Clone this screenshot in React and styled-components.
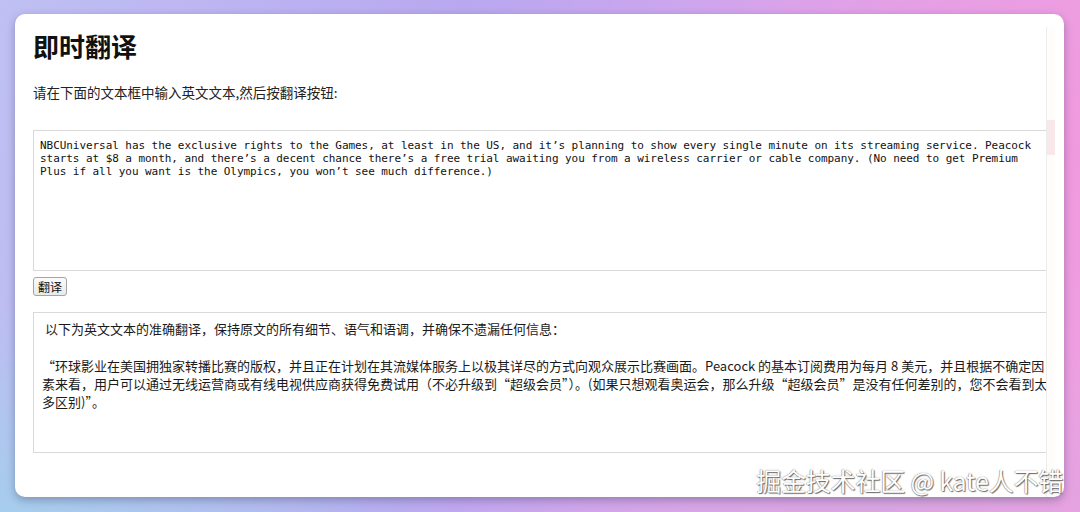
import React, { useState } from "react";
import styled, { createGlobalStyle } from "styled-components";

const sourceText =
  "NBCUniversal has the exclusive rights to the Games, at least in the US, and it’s planning to show every single minute on its streaming service. Peacock starts at $8 a month, and there’s a decent chance there’s a free trial awaiting you from a wireless carrier or cable company. (No need to get Premium Plus if all you want is the Olympics, you won’t see much difference.)";

const resultText =
  " 以下为英文文本的准确翻译，保持原文的所有细节、语气和语调，并确保不遗漏任何信息：\n\n“环球影业在美国拥独家转播比赛的版权，并且正在计划在其流媒体服务上以极其详尽的方式向观众展示比赛画面。Peacock 的基本订阅费用为每月 8 美元，并且根据不确定因素来看，用户可以通过无线运营商或有线电视供应商获得免费试用（不必升级到“超级会员”）。(如果只想观看奥运会，那么升级“超级会员”是没有任何差别的，您不会看到太多区别)”。";

const GlobalStyle = createGlobalStyle`
  html, body {
    margin: 0;
    padding: 0;
  }
  body {
    width: 1080px;
    height: 512px;
    overflow: hidden;
    font-family: "Noto Sans CJK SC", "Noto Sans", sans-serif;
    background:
      radial-gradient(ellipse 60% 80% at 100% 30%, #f09ade 0%, rgba(240,154,222,0) 70%),
      radial-gradient(ellipse 60% 60% at 0% 100%, #a6cdec 0%, rgba(166,205,236,0) 70%),
      radial-gradient(ellipse 50% 60% at 80% 100%, #d9a6e0 0%, rgba(217,166,224,0) 70%),
      linear-gradient(100deg, #bfc0f3 0%, #b9a8f0 40%, #d8a4ec 70%, #f0a0e0 100%);
  }
`;

export default function App() {
  const [text, setText] = useState(sourceText);

  return (
    <Page>
      <GlobalStyle />
      <Card>
        <Main>
          <Title>即时翻译</Title>
          <Intro>请在下面的文本框中输入英文文本,然后按翻译按钮:</Intro>
          <Source value={text} onChange={(e) => setText(e.target.value)} />
          <TranslateButton>翻译</TranslateButton>
          <Result>{resultText}</Result>
        </Main>
        <Gutter>
          <Thumb />
        </Gutter>
      </Card>
      <Watermark>掘金技术社区 @ kate人不错</Watermark>
    </Page>
  );
}

const Page = styled.div({
  position: "relative",
  width: "1080px",
  height: "512px",
  padding: "14px 16px 15px 15px",
  boxSizing: "border-box",
});
const Card = styled.div({
  display: "flex",
  height: "483px",
  background: "#fff",
  borderRadius: "10px",
  boxShadow: "0 3px 8px rgba(40,40,80,0.35)",
  padding: "0 9px 0 18px",
  boxSizing: "border-box",
  overflow: "hidden",
});
const Main = styled.div({
  flex: 1,
  minWidth: 0,
  overflow: "hidden",
  paddingTop: "16px",
  display: "flex",
  flexDirection: "column",
  alignItems: "flex-start",
});
const Title = styled.h1({
  margin: 0,
  fontSize: "26px",
  lineHeight: "31px",
  fontWeight: 700,
  color: "#111",
});
const Intro = styled.p({
  margin: "21px 0 0",
  fontSize: "13.5px",
  lineHeight: "20px",
  color: "#222",
});
const Source = styled.textarea({
  marginTop: "28px",
  flexShrink: 0,
  width: "1022px",
  height: "141px",
  boxSizing: "border-box",
  padding: "8px 6px",
  border: "1px solid #d9d9d9",
  borderRight: "none",
  fontFamily: '"DejaVu Sans Mono", "Liberation Mono", monospace',
  fontSize: "11px",
  letterSpacing: "-0.06px",
  lineHeight: "13px",
  color: "#111",
  resize: "none",
  outline: "none",
});
const TranslateButton = styled.button({
  marginTop: "6px",
  height: "19px",
  padding: "0 4px",
  fontFamily: '"Noto Sans CJK SC", sans-serif',
  fontSize: "12px",
  lineHeight: "15px",
  color: "#111",
  border: "1px solid #a4a4a4",
  borderRadius: "3px",
  background: "linear-gradient(#fbfbfb, #e9e9e9)",
});
const Result = styled.div({
  marginTop: "16px",
  flexShrink: 0,
  width: "1030px",
  height: "141px",
  boxSizing: "border-box",
  padding: "7px 8px",
  border: "1px solid #d9d9d9",
  borderRight: "none",
  whiteSpace: "pre-wrap",
  fontFamily: '"Noto Sans CJK SC", "Noto Sans", sans-serif',
  fontSize: "13px",
  lineHeight: "18.3px",
  color: "#1a1a1a",
});
const Gutter = styled.div({
  position: "relative",
  width: "8px",
  marginTop: "13px",
  borderLeft: "1px solid #ececec",
  background: "#fffdfb",
});
const Thumb = styled.div({
  position: "absolute",
  top: "93px",
  left: 0,
  right: 0,
  height: "35px",
  background: "#f8e8ec",
});
const Watermark = styled.div({
  position: "absolute",
  right: "17px",
  bottom: "17px",
  fontFamily: '"Noto Sans CJK SC", sans-serif',
  fontSize: "25px",
  lineHeight: "30px",
  color: "#fff",
  letterSpacing: "-0.2px",
  textShadow:
    "1px 1px 1px rgba(0,0,0,0.55), -0.5px -0.5px 0 rgba(0,0,0,0.35), 0 0 2px rgba(0,0,0,0.3)",
});
